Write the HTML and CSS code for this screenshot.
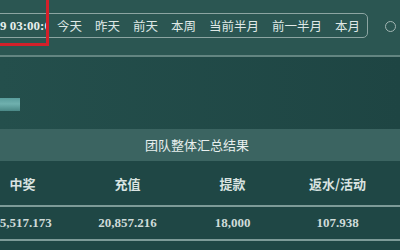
FILE: index.html
```html
<!DOCTYPE html>
<html lang="zh-CN">
<head>
<meta charset="utf-8">
<title>团队整体汇总结果</title>
<link rel="stylesheet" href="styles.css">
</head>
<body>
<div class="page">
  <div class="toolbar">
    <div class="range">
      <span class="date">9 03:00:00</span>
      <div class="quick">
        <span class="btn">今天</span>
        <span class="btn">昨天</span>
        <span class="btn">前天</span>
        <span class="btn">本周</span>
        <span class="btn">当前半月</span>
        <span class="btn">前一半月</span>
        <span class="btn">本月</span>
      </div>
    </div>
    <span class="radio"></span>
    <div class="highlight"></div>
  </div>
  <div class="info">
    <div class="mosaic"></div>
  </div>
  <div class="band">团队整体汇总结果</div>
  <div class="table">
    <div class="row head">
      <div class="cell">中奖</div>
      <div class="cell">充值</div>
      <div class="cell">提款</div>
      <div class="cell">返水/活动</div>
    </div>
    <div class="row data">
      <div class="cell">15,517.173</div>
      <div class="cell">20,857.216</div>
      <div class="cell">18,000</div>
      <div class="cell">107.938</div>
    </div>
  </div>
</div>
</body>
</html>
```

FILE: styles.css
```css
html, body {
  margin: 0;
  padding: 0;
}
body {
  width: 400px;
  height: 250px;
  overflow: hidden;
  background: #1f4745;
  font-family: "Noto Sans CJK SC", "Noto Sans", sans-serif;
  color: #e2eae8;
}
.page {
  width: 400px;
  height: 250px;
  overflow: hidden;
  position: relative;
}
.toolbar {
  position: relative;
  height: 55px;
  background: #2b5652;
  border-bottom: 2px solid #638581;
  display: flex;
  align-items: flex-start;
  padding-top: 13px;
  box-sizing: content-box;
  height: 42px;
}
.range {
  display: flex;
  align-items: center;
  height: 25px;
  box-sizing: border-box;
  margin-left: -10px;
  border: 1.5px solid #8ca5a2;
  border-radius: 5px;
  padding-right: 7px;
}
.date {
  width: 55px;
  padding-left: 9px;
  box-sizing: border-box;
  overflow: hidden;
  white-space: nowrap;
  font-family: "Liberation Serif", serif;
  font-weight: bold;
  font-size: 13px;
  color: #e6eeec;
}
.quick {
  display: flex;
  gap: 13px;
  margin-left: 11px;
}
.btn {
  font-size: 12.5px;
  line-height: 16px;
  color: #dfe8e6;
  white-space: nowrap;
}
.radio {
  width: 11px;
  height: 11px;
  box-sizing: border-box;
  border: 1.5px solid #a3b6b3;
  border-radius: 50%;
  margin-left: auto;
  margin-right: 4px;
  margin-top: 8px;
}
.highlight {
  position: absolute;
  left: -10px;
  top: -10px;
  width: 59px;
  height: 56px;
  box-sizing: border-box;
  border: 3px solid #d3202a;
}
.info {
  height: 72px;
  padding-top: 41px;
  box-sizing: border-box;
  background: linear-gradient(90deg, #244f4c, #1e4543);
}
.mosaic {
  width: 20px;
  height: 13px;
  background: linear-gradient(180deg, #5a9d9c 0%, #6fb0ae 45%, #4a8886 100%);
}
.band {
  height: 32px;
  line-height: 32px;
  background: #3b6461;
  text-align: center;
  font-size: 13px;
  color: #e8efee;
  padding-right: 6px;
}
.table {
  margin-left: -30px;
  width: 440px;
}
.row {
  display: grid;
  grid-template-columns: repeat(4, 105px);
  border-bottom: 2px solid #7d9b98;
}
.row.head {
  height: 44px;
  align-items: center;
}
.row.data {
  height: 32px;
  align-items: center;
}
.cell {
  text-align: center;
}
.head .cell {
  font-size: 13px;
  font-weight: bold;
  color: #d9e3e1;
  padding-top: 1px;
}
.data .cell {
  font-family: "Liberation Serif", serif;
  font-weight: bold;
  font-size: 13px;
  color: #cfdbd9;
}
```
